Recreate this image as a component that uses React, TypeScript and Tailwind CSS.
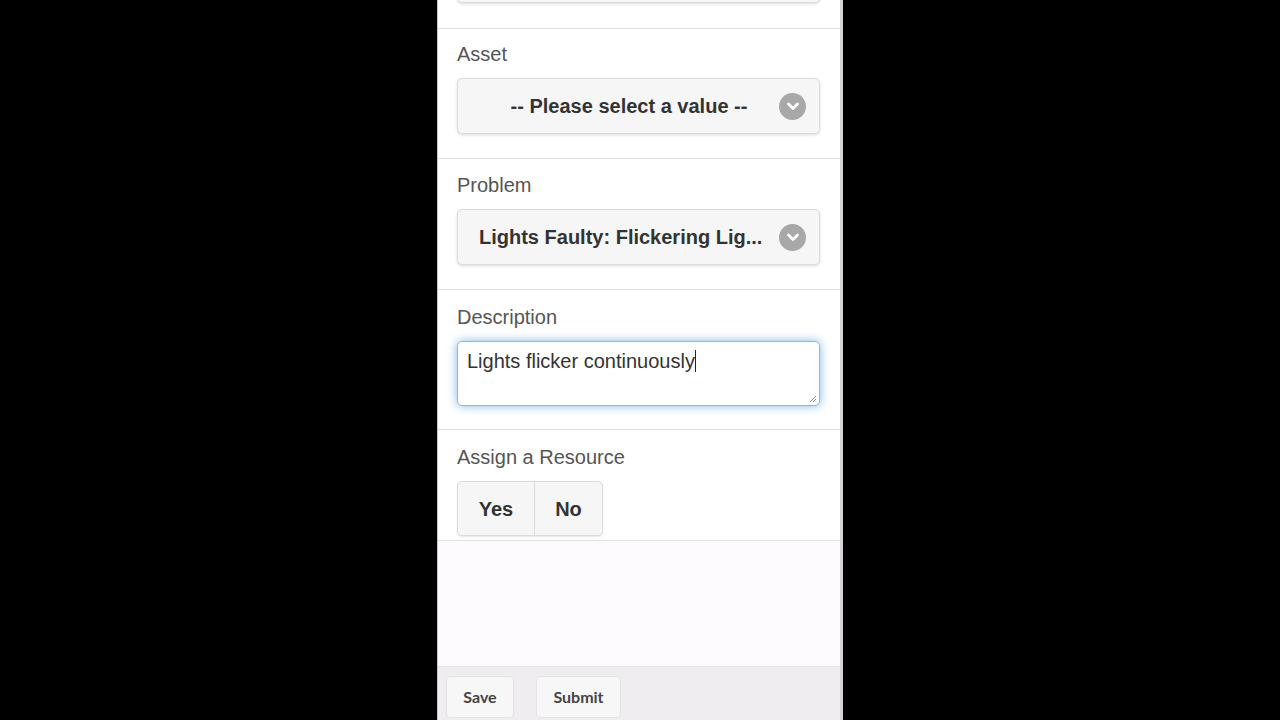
import React from 'react'

const Chevron = () => (
    <span className="flex h-[27px] w-[27px] shrink-0 items-center justify-center rounded-full bg-[#a8a8a8]">
        <svg width="16" height="16" viewBox="0 0 16 16" fill="none">
            <path d="M3.5 6 L8 10.5 L12.5 6" stroke="#fff" strokeWidth="2.8" strokeLinecap="round" strokeLinejoin="round" />
        </svg>
    </span>
)

function SelectBox({ text, center }: { text: string; center?: boolean }) {
    return (
        <div className="flex h-[56px] items-center rounded-[5px] border border-[#dcdcdc] bg-[#f6f6f6] pl-[21px] pr-[13px] shadow-[0_1px_3px_rgba(0,0,0,0.15)]">
            <span className={`flex-1 truncate text-[20px] font-bold text-[#333] ${center ? 'text-center' : 'text-left'}`}>{text}</span>
            <Chevron />
        </div>
    )
}

function Label({ children }: { children: React.ReactNode }) {
    return <div className="text-[20px] leading-[24px] text-[#555]">{children}</div>
}

export default function App() {
    return (
        <div className="flex h-[720px] w-full justify-center bg-black font-['Liberation_Sans',Arial,sans-serif]">
            <div className="flex h-full w-[406px] flex-col border-l border-r-[3px] border-l-[#c4c4c4] border-r-[#d6d6d6] bg-white">
                {/* partially scrolled-off field */}
                <div className="h-[29px] overflow-hidden border-b border-[#e2e2e2] px-[19px] pr-[20px]">
                    <div className="-mt-[53px] h-[56px] rounded-[5px] border border-[#dcdcdc] bg-[#f6f6f6] shadow-[0_1px_3px_rgba(0,0,0,0.15)]" />
                </div>

                <div className="border-b border-[#e2e2e2] pl-[19px] pr-[20px] pt-[13px] pb-[24px]">
                    <Label>Asset</Label>
                    <div className="mt-[12px]">
                        <SelectBox text="-- Please select a value --" center />
                    </div>
                </div>

                <div className="border-b border-[#e2e2e2] pl-[19px] pr-[20px] pt-[14px] pb-[24px]">
                    <Label>Problem</Label>
                    <div className="mt-[12px]">
                        <SelectBox text="Lights Faulty: Flickering Lig..." />
                    </div>
                </div>

                <div className="border-b border-[#e2e2e2] pl-[19px] pr-[20px] pt-[15px] pb-[23px]">
                    <Label>Description</Label>
                    <div className="relative mt-[12px] h-[65px] rounded-[5px] border border-[#86bbe8] bg-white px-[9px] pt-[4px] shadow-[0_0_10px_rgba(82,160,230,0.75)]">
                        <span className="text-[20px] leading-[24px] text-[#333]">Lights flicker continuously</span>
                        <span className="inline-block h-[22px] w-px translate-y-[4px] bg-[#222]" />
                        <svg className="absolute bottom-[2px] right-[2px]" width="9" height="9" viewBox="0 0 9 9">
                            <path d="M8 2 L2 8 M8 5 L5 8" stroke="#888" strokeWidth="1" />
                        </svg>
                    </div>
                </div>

                <div className="border-b border-[#e2e2e2] pl-[19px] pr-[20px] pt-[15px] pb-[4px]">
                    <Label>Assign a Resource</Label>
                    <div className="mt-[12px] flex h-[55px] w-[146px] rounded-[5px] border border-[#dcdcdc] bg-[#f6f6f6] text-[20px] font-bold text-[#333] shadow-[0_1px_2px_rgba(0,0,0,0.1)]">
                        <div className="flex w-[77px] items-center justify-center border-r border-[#dcdcdc]">Yes</div>
                        <div className="flex flex-1 items-center justify-center">No</div>
                    </div>
                </div>

                <div className="flex-1 bg-[#fdfbfd]" />

                <div className="flex h-[54px] gap-[22px] border-t border-[#e6e3e6] bg-[#efedef] pl-[8px] pt-[9px] font-['Lato',sans-serif]">
                    <button className="h-[42px] w-[68px] rounded-[4px] border border-[#e4e4e4] bg-[#f7f7f7] text-[16px] font-bold text-[#444]">Save</button>
                    <button className="h-[42px] w-[85px] rounded-[4px] border border-[#e4e4e4] bg-[#f7f7f7] text-[16px] font-bold text-[#444]">Submit</button>
                </div>
            </div>
        </div>
    )
}
